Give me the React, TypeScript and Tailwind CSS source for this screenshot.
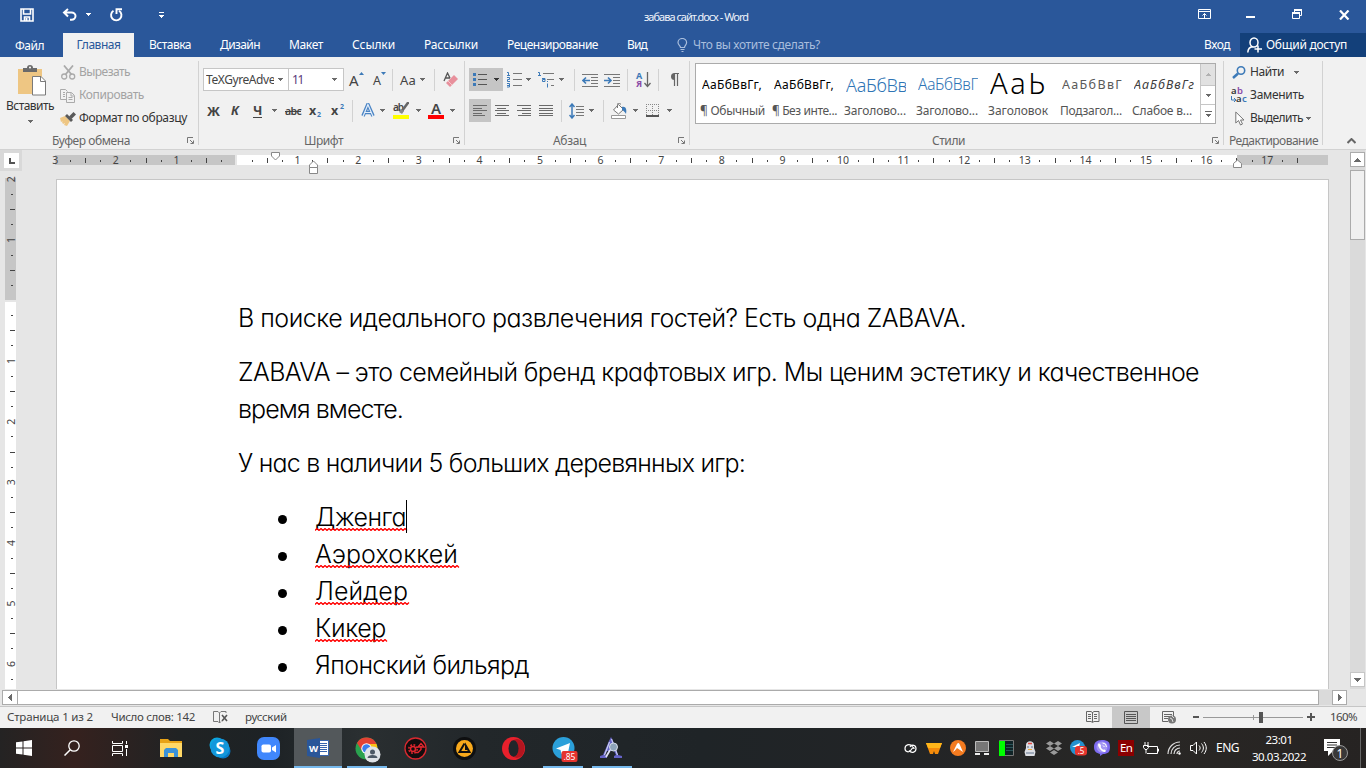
import { useLayoutEffect, useRef, type ReactNode } from "react";

/* Text run tracked to an exact advance width */
function T({ w, c = "", children }: { w: number; c?: string; children: string }) {
  const ref = useRef<HTMLSpanElement>(null);
  useLayoutEffect(() => {
    const el = ref.current;
    if (!el) return;
    el.style.letterSpacing = "0px";
    el.style.width = "max-content";
    const natural = el.getBoundingClientRect().width;
    el.style.letterSpacing = `${(w - natural) / children.length}px`;
    el.style.width = `${w}px`;
  }, [w, children]);
  return (
    <span ref={ref} className={`inline-block shrink-0 whitespace-nowrap ${c}`}>
      {children}
    </span>
  );
}

function I({ w, h, c = "", children }: { w: number; h: number; c?: string; children: ReactNode }) {
  return (
    <svg width={w} height={h} viewBox={`0 0 ${w} ${h}`} fill="none" className={`shrink-0 ${c}`}>
      {children}
    </svg>
  );
}

const Caret = ({ c = "" }: { c?: string }) => (
  <I w={5} h={3} c={c}><path d="M0 0h5v1H0zM1 1h3v1H1zM2 2h1v1H2z" fill="#6a6a6a" /></I>
);
const Arrow = ({ c = "" }: { c?: string }) => (
  <I w={7} h={4} c={c}><path d="M0 0h7v1H0zM1 1h5v1H1zM2 2h3v1H2zM3 3h1v1H3z" fill="#6a6a6a" /></I>
);
const SideArrow = ({ c = "" }: { c?: string }) => (
  <I w={4} h={7} c={c}><path d="M0 0h1v7H0zM1 1h1v5H1zM2 2h1v3H2zM3 3h1v1H3z" fill="#6a6a6a" /></I>
);
const Sep = ({ c = "" }: { c?: string }) => <div className={`h-[22px] w-px shrink-0 bg-[#d2d2d2] ${c}`} />;
const Launcher = () => (
  <I w={7} h={7}><path d="M.5 6V.5H6M3 3l3 3M6.5 3.5v3h-3" stroke="#777" /></I>
);
const Lines = ({ d, c = "" }: { d: string; c?: string }) => (
  <I w={14} h={11} c={c}><path d={d} stroke="#6a6a6a" shapeRendering="crispEdges" /></I>
);

function Group({ c, label, children }: { c: string; label: ReactNode; children: ReactNode }) {
  return (
    <div className={`relative flex h-[92px] shrink-0 flex-col ${c}`}>
      {children}
      <div className="mt-auto flex h-[17px] items-center text-[#666]">{label}</div>
      <div className="absolute top-1 right-0 h-[84px] w-px bg-[#d2d2d2]" />
    </div>
  );
}

function TitleBar() {
  return (
    <div className="flex h-[33px] items-center bg-[#2a579a] pl-5 text-white">
      <I w={15} h={14} c="-mt-1"><path d="M1 1h12v12H1zM3.500 1v5h7V1M4.500 13V9h5v4" stroke="#fff" strokeWidth="1.600" /><path d="M5.500 10h2v3h-2z" fill="#fff" /></I>
      <I w={16} h={13} c="-mt-1 ml-[27px]"><path d="M6 1L2 4.500 6 8.500M2 4.500h7.500a4 3.600 0 0 1 0 7.200H8" stroke="#fff" strokeWidth="2" /></I>
      <Caret c="-mt-1 ml-[8px] brightness-[2.4]" />
      <I w={14} h={14} c="-mt-1 ml-[18px]"><path d="M4.500 2.800A5.200 5.200 0 1 0 10 2.800" stroke="#fff" strokeWidth="1.900" /><path d="M7.500 6V1.200H13" stroke="#fff" strokeWidth="1.900" /></I>
      <I w={6} h={6} c="-mt-1 ml-9"><path d="M0 .5h5" stroke="#fff" /><path d="M0 3h5v1H0zM1 4h3v1H1zM2 5h1v1H2z" fill="#fff" /></I>
      <T w={104} c="ml-[479px] text-[11px] text-[#eef3fb]">забава сайт.docx - Word</T>
      <I w={14} h={11} c="-mt-1 ml-[450px]"><path d="M.5.5h12v9H.5zM.5 2.500h12M6.500 9V4.500M4.500 6.500l2-2 2 2" stroke="#fff" /></I>
      <I w={10} h={2} c="ml-[34px]"><path d="M0 1h9" stroke="#fff" strokeWidth="2" /></I>
      <I w={11} h={11} c="-mt-1 ml-9"><path d="M2.500 3V.5h7v6H8M.5 3.500h7v6h-7z" stroke="#fff" /><path d="M2 1h8M0 4h8" stroke="#fff" strokeWidth="2" /></I>
      <I w={11} h={10} c="-mt-1 ml-9"><path d="M1 .5l8.500 9M9.500.5L1 9.500" stroke="#fff" strokeWidth="2.200" /></I>
    </div>
  );
}

function Tabs() {
  return (
    <div className="flex h-6 items-center bg-[#2a579a] text-[12px] text-white">
      <T w={29} c="mt-px ml-[15px]">Файл</T>
      <div className="ml-[19px] flex h-6 w-[71px] items-center justify-center bg-[#f1f1f1] text-[#2a579a]">
        <T w={44}>Главная</T>
      </div>
      <T w={42} c="ml-[15px]">Вставка</T>
      <T w={40} c="ml-[29px]">Дизайн</T>
      <T w={34} c="ml-[29px]">Макет</T>
      <T w={43} c="ml-[29px]">Ссылки</T>
      <T w={54} c="ml-[29px]">Рассылки</T>
      <T w={91} c="ml-[29px]">Рецензирование</T>
      <T w={20} c="ml-[29px]">Вид</T>
      <I w={11} h={14} c="ml-[30px]"><path d="M3.500 9.500C3.500 7.500 1 7 1 4.500a4.300 4 0 0 1 8.600 0C9.600 7 7.500 7.500 7.500 9.500zM3.500 11.500h4M4.500 13.500h2" stroke="#a9bedd" strokeWidth="1.200" /></I>
      <T w={127} c="ml-[5px] text-[#a9bedd]">Что вы хотите сделать?</T>
      <T w={26} c="ml-[384px]">Вход</T>
      <div className="ml-[10px] flex h-6 grow items-center bg-[#13407a] pl-[7px]">
        <I w={16} h={16}><path d="M11 5.500a4 4.500 0 1 1-8 0 4 4.500 0 0 1 8 0zM.8 15.500C1 12 3 10 5.500 9.800M11 8.500v7M7.500 12h7.500" stroke="#fff" strokeWidth="1.500" /></I>
        <T w={81} c="ml-[3px]">Общий доступ</T>
      </div>
    </div>
  );
}

function Clipboard() {
  return (
    <Group
      c="w-[199px]"
      label={<><T w={78} c="ml-[52px]">Буфер обмена</T><div className="ml-[57px]"><Launcher /></div></>}
    >
      <div className="flex">
        <div className="flex w-[60px] flex-col items-center pt-2">
          <I w={28} h={31} c="ml-[4px]">
            <path d="M0 4h24v25H0z" fill="#eec683" />
            <path d="M5 7V3h4a3 3 0 0 1 6 0h4v4z" fill="#6a6a6a" /><circle cx="12" cy="2.500" r="1" fill="#fff" />
            <path d="M14.500 11.500h8.500l4.500 4.500v14h-13z" fill="#fff" stroke="#7a7a7a" /><path d="M22.500 11.500V16.500h5" stroke="#7a7a7a" />
          </I>
          <T w={48} c="mt-[2px] leading-4 text-[#333]">Вставить</T>
          <Caret c="mt-[6px]" />
        </div>
        <div className="flex flex-col pt-[4px] text-[#a3a3a3]">
          <div className="flex h-[23px] items-center">
            <I w={15} h={15} c="ml-px"><path d="M3 .5l7.500 9M12 .5l-7.500 9" stroke="#aaa" strokeWidth="1.800" /><circle cx="3.200" cy="11.500" r="2.500" stroke="#aaa" strokeWidth="1.300" /><circle cx="11.200" cy="11.500" r="2.500" stroke="#aaa" strokeWidth="1.300" /></I>
            <T w={51} c="ml-[3px] -mt-px">Вырезать</T>
          </div>
          <div className="flex h-[23px] items-center">
            <I w={15} h={14}><path d="M6 10.500H.5V.5h5l2 2M3 3.500h2M3 5.500h2M3 7.500h2M6.500 3.500h5l3 3v7h-8zM11 4v3h3M8.500 8.500h4M8.500 10.500h4" stroke="#aaa" /></I>
            <T w={65} c="ml-1 -mt-px">Копировать</T>
          </div>
          <div className="flex h-[23px] items-center text-[#333]">
            <I w={16} h={14}><path d="M0 6l5-2 5 5-3 5-3-1 1-2-2 1-1-2 1-1-2 1z" fill="#eec683" /><path d="M5 4l2-2 6 6-2 2z" fill="#595959" /><path d="M9 4.500L13.500 0 16 2.500 11.500 7z" fill="#595959" /></I>
            <T w={108} c="ml-[3px] -mt-px">Формат по образцу</T>
          </div>
        </div>
      </div>
    </Group>
  );
}

function FontGroup() {
  return (
    <Group
      c="w-[266px]"
      label={<><T w={39} c="ml-[105px]">Шрифт</T><div className="ml-[110px]"><Launcher /></div></>}
    >
      <div className="mt-[11px] flex h-[23px] items-center">
        <div className="ml-1 flex h-[23px] w-[86px] items-center border border-[#c6c6c6] bg-white">
          <div className="ml-[2px] w-[68px] overflow-hidden text-[#444]"><T w={76}>TeXGyreAdven</T></div>
          <Caret c="ml-[4px]" />
        </div>
        <div className="-ml-px flex h-[23px] w-[56px] items-center border border-[#c6c6c6] bg-white">
          <T w={11} c="ml-[3px] text-[#5a3a7a]">11</T>
          <Caret c="ml-[29px]" />
        </div>
        <T w={10} c="mt-px ml-[5px] text-[15px]">A</T>
        <I w={5} h={3} c="-mt-3"><path d="M0 3h5L2.500 0z" fill="#3d7ab8" /></I>
        <T w={8} c="ml-[9px] mt-[3px] text-[12.500px]">A</T>
        <I w={5} h={3} c="-mt-3"><path d="M0 0h5L2.500 3z" fill="#3d7ab8" /></I>
        <Sep c="ml-[6px]" />
        <T w={16} c="ml-[7px] text-[13px]">Aa</T>
        <Caret c="ml-[4px]" />
        <Sep c="ml-[9px]" />
        <I w={15} h={16} c="ml-[8px]">
          <path d="M1 9L4.500 1l2.500 5M2.500 6H7" stroke="#555" strokeWidth="1.300" />
          <path d="M11 3l4 4-8 8-4-4z" fill="#e8909c" /><path d="M5 9l4 4" stroke="#f6c6cc" />
        </I>
      </div>
      <div className="mt-[8px] flex h-[23px] items-center font-semibold text-[#444]">
        <T w={13} c="ml-2 text-[13px] font-bold">Ж</T>
        <T w={9} c="ml-[11px] text-[12.500px] font-bold italic">К</T>
        <T w={9} c="ml-[13px] text-[13px] font-bold border-b border-[#444] leading-[13px]">Ч</T>
        <Caret c="ml-[10px]" />
        <T w={16} c="ml-[8px] text-[10.500px] line-through">abc</T>
        <T w={7} c="ml-2 text-[12.500px] font-bold">x</T>
        <T w={4} c="mt-[9px] ml-px text-[7px] font-bold text-[#3d7ab8]">2</T>
        <T w={8} c="ml-[10px] text-[12.500px] font-bold">x</T>
        <T w={4} c="-mt-2 ml-px text-[7px] font-bold text-[#3d7ab8]">2</T>
        <Sep c="ml-[8px]" />
        <I w={14} h={15} c="ml-[8px]"><path d="M2 13L6.900 1.500 12 13M4 9.500h6" stroke="#4a84c4" strokeWidth="3.600" strokeLinejoin="round" /><path d="M2 13.500L6.900 1.500 12 13.500M4 9.500h6" stroke="#e4eefa" strokeWidth="1.200" /></I>
        <Caret c="ml-[5px]" />
        <div className="ml-[8px] flex h-[17px] w-4 flex-col">
          <div className="flex h-[13px]">
            <T w={10} c="text-[10px] leading-[10px]">ab</T>
            <I w={10} h={13} c="-ml-1"><path d="M9.500 0L3 9" stroke="#666" strokeWidth="2.500" /><path d="M0 10l2-3 3 2-2 3z" fill="#888" /></I>
          </div>
          <div className="h-1 w-4 bg-[#ff0]" />
        </div>
        <Caret c="ml-[7px]" />
        <div className="ml-[7px] flex h-[17px] w-4 flex-col items-center">
          <T w={10} c="text-[15px] leading-[13px] h-[13px]">A</T>
          <div className="h-1 w-4 bg-[#f00]" />
        </div>
        <Caret c="ml-[6px]" />
      </div>
    </Group>
  );
}

function ParagraphGroup() {
  return (
    <Group
      c="w-[225px]"
      label={<><T w={33} c="ml-[88px]">Абзац</T><div className="ml-[92px]"><Launcher /></div></>}
    >
      <div className="mt-[11px] flex h-[23px] items-center">
        <div className="ml-1 flex h-[23px] w-[34px] items-center bg-[#c5c5c5]">
          <I w={14} h={15} c="ml-1"><path d="M5 2.500h9M5 7.500h9M5 12.500h9" stroke="#555" /><path d="M0 1h3v3H0zM0 6h3v3H0zM0 11h3v3H0z" fill="#3d7ab8" /></I>
          <Caret c="ml-[7px] brightness-50" />
        </div>
        <I w={15} h={17} c="ml-[4px]"><path d="M6 2.500h9M6 8.500h9M6 14.500h9" stroke="#777" /><path d="M0 1.500h1.500v3M0 4.500h3M0 6.500h2.500v2H.5v2H3M0 12.500h2.500v3.500H0M0 14.500h2" stroke="#3d7ab8" /></I>
        <Caret c="ml-[4px]" />
        <I w={17} h={17} c="ml-[7px]"><path d="M5 2.500h11M9 8.500h7M13 14.500h3" stroke="#777" /><path d="M0 1.500h1.500v3M0 4.500h3M4 7.500h3v3H4.500v-2H7M9.500 12.500v4M9.500 10v1" stroke="#3d7ab8" /></I>
        <Caret c="ml-[4px]" />
        <Sep c="ml-[10px]" />
        <I w={16} h={14} c="ml-[7px]"><path d="M0 1.500h16M9 4.500h7M9 7.500h7M9 10.500h7M0 13.500h16" stroke="#777" /><path d="M8 7.500H1M4 4.500l-3 3 3 3" stroke="#3d7ab8" strokeWidth="1.600" /></I>
        <I w={16} h={14} c="ml-[6px]"><path d="M0 1.500h16M9 4.500h7M9 7.500h7M9 10.500h7M0 13.500h16" stroke="#777" /><path d="M0 7.500h7M4 4.500l3 3-3 3" stroke="#3d7ab8" strokeWidth="1.600" /></I>
        <Sep c="ml-[7px]" />
        <div className="ml-[8px] flex items-center">
          <div className="flex w-[7px] flex-col items-start">
            <T w={7} c="text-[9px] leading-[9px] font-bold text-[#3d7ab8]">А</T>
            <T w={7} c="text-[9px] leading-[8px] font-bold text-[#8a4aa8]">Я</T>
          </div>
          <I w={7} h={16} c="ml-px"><path d="M3.500 0v14M.5 11l3 3.500 3-3.500" stroke="#666" strokeWidth="1.300" /></I>
        </div>
        <Sep c="ml-[7px]" />
        <I w={10} h={13} c="ml-[10px]"><path d="M5 .5h5M5.500 0v13M8.500 0v13" stroke="#666" strokeWidth="1.200" /><path d="M5.500 0A3.500 3.500 0 0 0 5.500 7z" fill="#666" /></I>
      </div>
      <div className="mt-[8px] flex h-[23px] items-center">
        <div className="ml-1 flex h-[23px] w-[22px] items-center justify-center bg-[#c5c5c5]">
          <Lines d="M0 .5h14M0 3.500h9M0 5.500h14M0 8.500h9M0 10.500h12" />
        </div>
        <Lines c="ml-[4px]" d="M0 .5h14M2 3.500h9M0 5.500h14M2 8.500h9M0 10.500h14" />
        <Lines c="ml-[8px]" d="M0 .5h14M5 3.500h9M0 5.500h14M5 8.500h9M1 10.500h13" />
        <Lines c="ml-[8px]" d="M0 .5h14M0 3.500h14M0 5.500h14M0 8.500h14M0 10.500h14" />
        <Sep c="ml-[8px]" />
        <I w={15} h={16} c="ml-[7px]"><path d="M7 3.500h8M7 6.500h8M7 9.500h8M7 12.500h8" stroke="#777" /><path d="M3 1v14M.5 4L3 1l2.500 3M.5 12L3 15l2.500-3" stroke="#3d7ab8" strokeWidth="1.500" /></I>
        <Caret c="ml-[5px]" />
        <Sep c="ml-[9px]" />
        <I w={17} h={16} c="ml-[7px]"><path d="M2.500 7l5-5.500 5 5-5 4.500z" fill="#fff" stroke="#777" /><path d="M6.500 5V1.500a1.500 1.500 0 0 1 3 0" stroke="#777" /><path d="M11 4c4-1 5 3 4 7-1-2-2-3-4-4z" fill="#3d7ab8" /><path d="M.5 12.500h14v3H.5z" fill="#fff" stroke="#999" /></I>
        <Caret c="ml-[5px]" />
        <I w={13} h={13} c="ml-[8px]"><path d="M.5 0v11M12.500 0v11M6.500 0v11M0 .5h13M0 6.500h12" stroke="#888" strokeDasharray="1 1" /><path d="M0 12h13" stroke="#555" strokeWidth="2" /></I>
        <Caret c="ml-[8px]" />
      </div>
    </Group>
  );
}

function StyleTile({ preview, name, w }: { preview: ReactNode; name: string; w: number }) {
  return (
    <div className="flex h-[58px] w-[72px] flex-col items-start pl-[6px]">
      <div className="mt-[3px] flex h-[36px] w-[60px] items-center overflow-hidden text-black">{preview}</div>
      <T w={w} c="-ml-[2px] leading-4 text-[#555]">{name}</T>
    </div>
  );
}

function StylesGroup() {
  return (
    <Group
      c="w-[534px]"
      label={<><T w={33} c="ml-[242px]">Стили</T><div className="ml-[247px]"><Launcher /></div></>}
    >
      <div className="mt-[6px] ml-[5px] flex h-[61px] w-[521px] border border-[#ababab] bg-white">
        <StyleTile w={65} name="¶ Обычный" preview={<T w={60} c="text-[12px]">АаБбВвГг,</T>} />
        <StyleTile w={65} name="¶ Без инте..." preview={<T w={60} c="text-[12px]">АаБбВвГг,</T>} />
        <StyleTile w={62} name="Заголово..." preview={<T w={70} c="text-[18px] font-light text-[#2e74b5]">АаБбВвГ</T>} />
        <StyleTile w={62} name="Заголово..." preview={<T w={60} c="text-[15.500px] font-light text-[#2e74b5] -mt-0.5">АаБбВвГ</T>} />
        <StyleTile w={60} name="Заголовок" preview={<T w={58} c="text-[29px] leading-[36px] font-light -mt-1">АаЬ</T>} />
        <StyleTile w={62} name="Подзагол..." preview={<T w={61} c="text-[12.500px] text-[#5a5a5a]">АаБбВвГ</T>} />
        <StyleTile w={60} name="Слабое в..." preview={<T w={61} c="text-[12.500px] text-[#404040] italic">АаБбВвГг</T>} />
        <div className="flex grow flex-col border-l border-[#c6c6c6]">
          <div className="flex h-[21px] items-center justify-center bg-[#e1e1e1]"><Caret c="rotate-180 opacity-40" /></div>
          <div className="flex h-[19px] items-center justify-center border-t border-[#c6c6c6]"><Caret /></div>
          <div className="flex h-[19px] items-center justify-center border-t border-[#c6c6c6]">
            <I w={7} h={6}><path d="M0 .5h7" stroke="#666" /><path d="M1 3h5v1H1zM2 4h3v1H2zM3 5h1v1H3z" fill="#666" /></I>
          </div>
        </div>
      </div>
    </Group>
  );
}

function EditingGroup() {
  return (
    <Group c="w-[99px] pt-[4px]" label={<T w={89} c="ml-[5px]">Редактирование</T>}>
      <div className="flex h-[23px] items-center text-[#333]">
        <I w={14} h={13} c="ml-2"><circle cx="9" cy="4.500" r="3.700" stroke="#3d7ab8" strokeWidth="1.600" /><path d="M6 7.500L1 12" stroke="#3d7ab8" strokeWidth="2.500" /></I>
        <T w={34} c="-mt-px ml-1">Найти</T><Caret c="ml-[10px]" />
      </div>
      <div className="flex h-[23px] items-center text-[#333]">
        <div className="ml-[7px] flex h-[17px] w-[17px] flex-col text-[9.500px] leading-[8px] font-semibold">
          <span className="flex"><T w={6}>a</T><T w={6} c="text-[#8a4aa8]">b</T></span>
          <span className="flex"><I w={5} h={8}><path d="M.5 1v4H5M3 3l2 2-2 2" stroke="#3d7ab8" /></I><T w={6}>a</T><T w={5} c="text-[#3d7ab8]">c</T></span>
        </div>
        <T w={54} c="-mt-px ml-[2px]">Заменить</T>
      </div>
      <div className="flex h-[23px] items-center text-[#333]">
        <I w={10} h={15} c="ml-[11px]"><path d="M.8 1v11l2.700-2.500L5.500 14l2-1-2-4H9z" fill="#fff" stroke="#777" /></I>
        <T w={53} c="-mt-px ml-[5px]">Выделить</T><Caret c="ml-[3px]" />
      </div>
    </Group>
  );
}

const CM = 60.6;

function HorizontalRuler() {
  const marks = Array.from({ length: 83 }, (_, i) => i - 12);
  return (
    <svg width={1274} height={24} className="mt-[3px] ml-[33px] shrink-0 overflow-visible text-[11px]">
      <path d="M0 2h180v10H0zM1182 2h91v10h-91z" fill="#c6c6c6" />
      <path d="M182 2h1000v10H182z" fill="#fff" />
      {marks.map((q) => {
        const x = 182 + (q * CM) / 4;
        if (q === 0 || x > 1268) return null;
        if (q % 4 === 0)
          return <text key={q} x={x} y={11} textAnchor="middle" fontSize={10.500} fill="#444">{Math.abs(q / 4)}</text>;
        return <path key={q} d={q % 2 === 0 ? `M${Math.floor(x)}.5 5v5` : `M${Math.floor(x)}.5 7v2`} stroke="#444" />;
      })}
      <path d="M216.500-.5h8v3.500l-4 4-4-4z" fill="#fff" stroke="#888" />
      <path d="M254.500 14.500V12l4-4 4 4v2.500zM254.500 14.500h8v6h-8z" fill="#fff" stroke="#888" />
      <path d="M1178.500 14.500v-4l4-3.500 4 3.500v4z" fill="#fff" stroke="#888" />
    </svg>
  );
}

function VerticalRuler() {
  const marks = Array.from({ length: 34 }, (_, i) => i - 8);
  return (
    <svg width={12} height={511} className="ml-[5px] shrink-0 overflow-visible">
      <path d="M0-1h11v122H0z" fill="#c6c6c6" />
      <path d="M0 123h11v388H0z" fill="#fff" />
      {marks.map((q) => {
        const y = 121.500 + (q * CM) / 4;
        if (q === 0) return null;
        if (q % 4 === 0)
          return <text key={q} x={0} y={0} transform={`translate(10 ${y}) rotate(-90)`} textAnchor="middle" fontSize={10.500} fill="#444">{Math.abs(q / 4)}</text>;
        return <path key={q} d={q % 2 === 0 ? `M5 ${Math.floor(y)}.5h5` : `M6 ${Math.floor(y)}.5h2`} stroke="#444" />;
      })}
    </svg>
  );
}

function Squiggle({ w }: { w: number }) {
  const points = Array.from({ length: Math.floor(w / 2) + 1 }, (_, i) => `${i * 2},${i % 2 ? 0.500 : 2.500}`).join(" ");
  return (
    <svg width={w + 1} height={3} className="absolute top-[29px] left-0">
      <polyline points={points} fill="none" stroke="#f00" strokeWidth="1.300" />
    </svg>
  );
}

const bullets: { text: string; w: number; line: number }[] = [
  { text: "Дженга", w: 91, line: 92 },
  { text: "Аэрохоккей", w: 143, line: 144 },
  { text: "Лейдер", w: 93, line: 94 },
  { text: "Кикер", w: 71, line: 72 },
  { text: "Японский бильярд", w: 214, line: 0 },
];

function Document() {
  return (
    <div className="ml-[39px] h-[511px] w-[1273px] shrink-0 overflow-hidden border border-b-0 border-[#c6c6c6] bg-white pt-[120px] pl-[181px] font-[Inter,sans-serif] text-[25px] leading-[37px] font-[330] text-black [font-feature-settings:'cv11']">
      <p className="mb-[17px]"><T w={728}>В поиске идеального развлечения гостей? Есть одна ZABAVA.</T></p>
      <p className="mb-[17px] flex flex-col items-start">
        <T w={961}>ZABAVA – это семейный бренд крафтовых игр. Мы ценим эстетику и качественное</T>
        <T w={165}>время вместе.</T>
      </p>
      <p className="mb-[17px]"><T w={507}>У нас в наличии 5 больших деревянных игр:</T></p>
      <ul>
        {bullets.map((b, i) => (
          <li key={b.text} className="flex h-[37px] items-center">
            <span className="mt-1 ml-10 size-[9px] rounded-full bg-black" />
            <span className="relative ml-[28px] flex">
              <T w={b.w}>{b.text}</T>
              {b.line > 0 && <Squiggle w={b.line} />}
              {i === 0 && <span className="absolute top-px left-[91px] h-[33px] w-px bg-black" />}
            </span>
          </li>
        ))}
      </ul>
    </div>
  );
}

function StatusBar() {
  return (
    <div className="flex h-[22px] items-center border-t border-[#c6c6c6] bg-[#f1f1f1] pb-px text-[11.500px] text-[#444]">
      <T w={86} c="ml-[7px]">Страница 1 из 2</T>
      <T w={84} c="ml-[18px]">Число слов: 142</T>
      <I w={15} h={13} c="ml-[18px]"><path d="M6.500 12V2L5 .5H.5v10H5l1.500 1.500L8 10.500M6.500 2L8 .5h5V2" stroke="#777" /><path d="M9 4l5 6M14 4l-5 6" stroke="#555" strokeWidth="1.600" /></I>
      <T w={42} c="ml-[17px]">русский</T>
      <I w={14} h={12} c="ml-[799px]"><path d="M6.500 11.500L5 10.500H.5v-10H5L6.500 1.500 8 .5h5v10H8zM6.500 1v10M2 3.500h3M2 5.500h3M2 7.500h3M8 3.500h3M8 5.500h3M8 7.500h3" stroke="#666" /></I>
      <div className="-mb-px ml-[12px] flex h-[21px] w-[38px] items-center justify-center bg-[#c8c8c8]">
        <I w={14} h={13}><path d="M.5.5h13v12H.5zM2 3.500h10M2 5.500h10M2 7.500h10M2 9.500h10" stroke="#555" /></I>
      </div>
      <I w={15} h={13} c="ml-3"><path d="M6 10.500H.5V.5h11V5M2 3.500h8M2 5.500h6M2 7.500h4" stroke="#666" /><circle cx="10" cy="8.500" r="4" fill="#777" /><path d="M8 7l2 1 1 3M10 5l2 2" stroke="#ddd" /></I>
      <div className="ml-[16px] h-[2px] w-[6px] bg-[#555]" />
      <I w={100} h={12} c="ml-1"><path d="M0 6.500h100M50.500 4v5" stroke="#999" /><path d="M56 1h4v11h-4z" fill="#555" /></I>
      <I w={8} h={8} c="ml-1"><path d="M0 4h8M4 0v8" stroke="#555" strokeWidth="2" /></I>
      <T w={27} c="ml-[15px]">160%</T>
    </div>
  );
}

function Slot({ c = "w-[49px]", bar, children }: { c?: string; bar?: string; children: ReactNode }) {
  return (
    <div className={`relative flex h-10 shrink-0 items-center justify-center ${c}`}>
      {children}
      {bar && <div className={`absolute bottom-0 h-[2px] bg-[#76b9ed] ${bar}`} />}
    </div>
  );
}

function Taskbar() {
  return (
    <div className="flex h-10 items-center bg-[linear-gradient(90deg,#242323_0px,#35211e_75px,#2b2221_125px,#202324_180px,#1d2225_270px,#2a2f31_360px,#22272a_480px,#1f2427_700px,#222426_900px,#292725_1150px,#262322_1366px)] text-white">
      <Slot c="w-12"><I w={16} h={16}><path d="M0 2.300L6.500 1.400v6.100H0zM7.500 1.200L16 0v7.500H7.500zM0 8.500h6.500v6.100L0 13.700zM7.500 8.500H16V16l-8.500-1.200z" fill="#fff" /></I></Slot>
      <Slot c="w-12"><I w={16} h={16}><circle cx="10" cy="6" r="5.200" stroke="#fff" strokeWidth="1.300" /><path d="M6.300 9.700L.5 15.500" stroke="#fff" strokeWidth="1.500" /></I></Slot>
      <Slot c="w-12"><I w={17} h={15}><path d="M.5 0v2.500h10V0M.5 15v-2.500h10V15M.5 4.500h10v6H.5zM14.500 0v3M14.500 8v7" stroke="#fff" /><path d="M13 4h3v3h-3z" fill="#fff" /></I></Slot>
      <Slot c="w-[53px]"><I w={22} h={18}><path d="M0 0h8l2 2h12v16H0z" fill="#e8a317" /><path d="M0 4h22v14H0z" fill="#ffd867" /><path d="M4 18v-7l2-2h10l2 2v7h-4v-4H8v4z" fill="#3b92d8" /></I></Slot>
      <Slot c="w-[46px]"><I w={22} h={22}><circle cx="8" cy="8" r="7.500" fill="#0ba6e0" /><circle cx="14" cy="14" r="7.500" fill="#0878c4" /><circle cx="11" cy="11" r="9.500" fill="#1297db" /><text x="11" y="16.500" textAnchor="middle" fontSize="16" fontWeight="bold" fill="#fff">S</text></I></Slot>
      <Slot c="w-[51px]"><I w={23} h={23}><rect width="23" height="23" rx="7" fill="#4087fc" /><rect x="4.500" y="7.500" width="9.500" height="8" rx="1.800" fill="#fff" /><path d="M15 10.500l4-2.500v7.500l-4-2.500z" fill="#fff" /></I></Slot>
      <Slot c="w-12 bg-[#53585b]" bar="w-12"><I w={23} h={20}><path d="M11 2.500h10.500v15H11z" fill="#fff" stroke="#3764ad" /><path d="M13 5.500h7M13 7.500h7M13 9.500h7M13 11.500h7M13 13.500h7" stroke="#3764ad" /><path d="M0 2l13-2v20L0 18z" fill="#2a5699" /><text x="6.500" y="13.500" textAnchor="middle" fontSize="9.500" fontWeight="bold" fill="#fff">W</text></I></Slot>
      <Slot bar="w-10">
        <I w={26} h={26} c="mt-[3px] ml-[3px]">
          <circle cx="11.500" cy="11.500" r="11" fill="#2aa24f" /><path d="M2 6a11 11 0 0 1 19.500 1H11.500L7 14z" fill="#e34133" /><path d="M21.500 7a11 11 0 0 1-10 15.500L16.500 12 12 7z" fill="#fbc116" />
          <circle cx="11.500" cy="11.500" r="5.200" fill="#fff" /><circle cx="11.500" cy="11.500" r="4.200" fill="#3b7ded" />
          <circle cx="17.500" cy="17.500" r="8" fill="#dfe3e8" /><circle cx="17.500" cy="15" r="2.500" fill="#4d5966" /><path d="M12.500 21c0-4 10-4 10 0z" fill="#4d5966" />
        </I>
      </Slot>
      <Slot><I w={23} h={23}><circle cx="11.500" cy="11.500" r="10.500" fill="#120d0e" stroke="#d8292f" strokeWidth="1.300" /><circle cx="9" cy="12" r="2.500" stroke="#e1262e" strokeWidth="1.500" /><circle cx="9" cy="12" r="4.200" stroke="#e1262e" strokeWidth="1.500" strokeDasharray="1.800 1.500" /><path d="M11 15.500h3l3-3V9M14 10l3-3.500 3 3.500z" stroke="#e1262e" strokeWidth="1.400" /></I></Slot>
      <Slot><I w={23} h={23}><circle cx="11.500" cy="11.500" r="11.500" fill="#0e0f10" /><circle cx="11.500" cy="11.500" r="8.500" fill="#f8a91b" /><path d="M11.500 6.500L6.500 15h10L13 9v4" stroke="#111" strokeWidth="2" /></I></Slot>
      <Slot><I w={23} h={23}><ellipse cx="11.500" cy="11.500" rx="11.500" ry="11.500" fill="#e8202c" /><ellipse cx="15" cy="11.500" rx="7.500" ry="9.500" fill="#b3151f" /><ellipse cx="11.500" cy="11.500" rx="5" ry="8.200" fill="#20262a" /></I></Slot>
      <Slot bar="w-10">
        <I w={27} h={25} c="mt-[3px] ml-[5px]"><circle cx="11.500" cy="11" r="11" fill="#2ba0da" /><path d="M4 11.500L18 6l-2.500 12-4-3-2 2-1-4z" fill="#fff" /><rect x="9.500" y="14" width="16" height="11" rx="2" fill="#e6342f" /><text x="17.500" y="22.500" textAnchor="middle" fontSize="8.500" fill="#fff">.85</text></I>
      </Slot>
      <Slot bar="w-10"><I w={23} h={22}><path d="M0 19l3-1L9 4l2-4 2 4 5 14 4 1v2h-8v-2l2-1-2-4H7l-2 4 2 1v2H0z" fill="#6563c6" /><path d="M9.500 5L4.500 18M11.500 2l6 16" stroke="#c9ccf3" strokeWidth="1.200" /><circle cx="13.500" cy="10" r="4" fill="#8ea4b9" stroke="#d5dce6" /><path d="M10 13l-4 7" stroke="#dfe2f5" strokeWidth="1.800" /></I></Slot>

      <div className="ml-[262px] flex">
        <Slot c="w-6"><I w={13} h={9}><path d="M9 2.500C5-1 1 1 1 4.500 1 8 5 9 7 6s3-3 3-1M5 6.500C8 10 12 8 12 4.500S8 0 6 3" stroke="#fff" strokeWidth="1.200" /></I></Slot>
        <Slot c="w-6"><I w={16} h={12}><path d="M0 1h5l3 4 3-4h5l-4 11H9L8 9l-1 3H4z" fill="#f58b0a" /><path d="M0 1h16l-2 5H2z" fill="#ffb61a" /></I></Slot>
        <Slot c="w-6"><I w={16} h={16}><circle cx="8" cy="8" r="8" fill="#f47b20" /><path d="M3 12L7 4c1-1.500 2-1 2.500 0l3.500 8-3-2-3-2c-1 1-2 3-4 4z" fill="#fff" /></I></Slot>
        <Slot c="w-6"><I w={15} h={15}><path d="M.5.5h13v10H.5z" fill="#777" stroke="#bbb" /><path d="M0 13h5M9 13h5" stroke="#eee" strokeWidth="2" /></I></Slot>
        <Slot c="w-6"><I w={15} h={16}><path d="M.5.5h14v15H.5z" fill="#102327" stroke="#777" /><path d="M0 1h6v15H0z" fill="#0f0" /><path d="M7 4.500h7M7 7.500h7M7 10.500h7" stroke="#2b5358" /></I></Slot>
        <Slot c="w-6"><I w={12} h={15}><path d="M2 4c0-5 8-5 8 0v3l1.500 4-1 4h-9l-1-4L2 7z" fill="#dcdee4" /><path d="M4 2.500h4" stroke="#e24b42" strokeWidth="1.500" /><path d="M3 6h2M7 6h2M2 12h8" stroke="#62758f" /><path d="M4 8.500h4" stroke="#e9a93b" /></I></Slot>
        <Slot c="w-6"><I w={16} h={14}><path d="M4 0l4 2.500L4 5 0 2.500zM12 0l4 2.500L12 5 8 2.500zM4 5l4 2.500L4 10 0 7.500zM12 5l4 2.500-4 2.500-4-2.500zM8 9l4 2.500L8 14l-4-2.500z" fill="#9a9a9a" /></I></Slot>
        <Slot c="w-6"><I w={17} h={16}><circle cx="7.500" cy="7.500" r="7.500" fill="#2491cf" /><path d="M2 7l8-4-1 4z" fill="#fff" /><rect x="5" y="6" width="12" height="9.500" rx="3" fill="#e5342d" /><text x="11" y="13.500" textAnchor="middle" fontSize="8" fill="#fff">.5</text></I></Slot>
        <Slot c="w-6"><I w={16} h={16}><path d="M8 0c6 0 8 2 8 7s-2 7-7 7l-3 2v-2C2 13 0 11 0 7s2-7 8-7z" fill="#7d6bf0" /><circle cx="8" cy="7" r="5.500" fill="#fff" opacity=".3" /><path d="M4.500 3.500c-2 2 3 9 6.500 8.500 2-1 0-2.500-1-2.500-1 1-4-2-3-3.500 0-1-1-3-2.500-2.500z" fill="#fff" /><path d="M8.500 3a4 4 0 0 1 4 4M9 5.500l1.500 1.500" stroke="#fff" /></I></Slot>
        <Slot c="w-6"><div className="flex size-4 items-center justify-center bg-[#8b0000] text-[11.500px] leading-4"><T w={12}>En</T></div></Slot>
        <Slot c="w-6"><I w={17} h={13}><path d="M5 4.500h10.500v7H5M15.500 7h1v2.500M3 0v3M6 0v3M1.500 3.500h5v2l-1.500 2h-2l-1.500-2zM4 8v3.500" stroke="#fff" /></I></Slot>
        <Slot c="w-6"><I w={14} h={14}><path d="M1 13A12 12 0 0 1 13 1M4 13a9 9 0 0 1 9-9M7 13a6 6 0 0 1 6-6M10 13a3 3 0 0 1 3-3" stroke="#ddd" strokeWidth="1.200" /><circle cx="12.500" cy="12.500" r="1.200" fill="#fff" /></I></Slot>
        <Slot c="w-6"><I w={17} h={14}><path d="M.5 4.500H3L6.500 1v12L3 9.500H.5zM9 4.500c1.500 1.500 1.500 3.500 0 5M11.500 2.500c2.500 3 2.500 6 0 9M14 1c3 4 3 8 0 12" stroke="#fff" /></I></Slot>
      </div>
      <T w={23} c="ml-[6px] text-[12px]">ENG</T>
      <div className="ml-[13px] flex w-[54px] flex-col items-center text-[11.500px] leading-[17px]">
        <T w={27}>23:01</T>
        <T w={54}>30.03.2022</T>
      </div>
      <I w={25} h={25} c="mt-1 ml-[18px]"><path d="M0 1h16v12H9l-5 5v-5H0z" fill="#fff" /><path d="M3 4.500h10M3 7h10M3 9.500h10" stroke="#333" /><circle cx="16" cy="15" r="7.500" fill="#393838" stroke="#999" /><text x="16" y="19.500" textAnchor="middle" fontSize="12" fill="#fff">1</text></I>
      <div className="ml-[11px] h-10 w-px bg-[#666]" />
    </div>
  );
}

export default function App() {
  return (
    <div className="h-[768px] w-[1366px] overflow-hidden bg-[#e6e6e6] font-['Noto_Sans','Open_Sans',sans-serif] text-[12px] leading-4">
      <TitleBar />
      <Tabs />
      <div className="flex h-[93px] border-b border-[#d2d2d2] bg-[#f1f1f1] text-[#444]">
        <Clipboard />
        <FontGroup />
        <ParagraphGroup />
        <StylesGroup />
        <EditingGroup />
        <I w={9} h={6} c="mt-[81px] ml-6"><path d="M.5 5L4.500 1l4 4" stroke="#666" strokeWidth="2" /></I>
      </div>
      <div className="flex h-[539px]">
        <div className="w-[1350px]">
          <div className="flex h-[29px]">
            <div className="flex h-[21px] w-[22px] shrink-0 items-center justify-center bg-[#d9d9d9]">
              <div className="ml-px flex size-[15px] items-center justify-center bg-white"><I w={6} h={6}><path d="M1 0v5h5" stroke="#555" strokeWidth="2" /></I></div>
            </div>
            <HorizontalRuler />
          </div>
          <div className="flex h-[510px]"><VerticalRuler /><Document /></div>
        </div>
        <div className="flex w-[15px] flex-col bg-[#dadada] pt-[2px]">
          <div className="flex h-[15px] items-center justify-center border border-[#ababab] bg-white"><Arrow c="rotate-180" /></div>
          <div className="mt-[3px] h-[70px] border border-[#ababab] bg-[#f0f0f0]" />
          <div className="mt-auto mb-[2px] flex h-[15px] items-center justify-center border border-[#c6c6c6] bg-white"><Arrow /></div>
        </div>
      </div>
      <div className="relative flex h-[17px] items-center bg-[#e6e6e6]">
        <div className="ml-[2px] flex h-[15px] w-[16px] items-center justify-center border border-[#ababab] bg-white"><SideArrow c="rotate-180" /></div>
        <div className="-ml-px h-[15px] w-[1302px] border border-[#ababab] bg-white" />
        <div className="h-[15px] w-[13px] bg-[#dadada]" />
        <div className="flex h-[15px] w-[15px] items-center justify-center border border-[#ababab] bg-white"><SideArrow /></div>
      </div>
      <StatusBar />
      <Taskbar />
    </div>
  );
}
